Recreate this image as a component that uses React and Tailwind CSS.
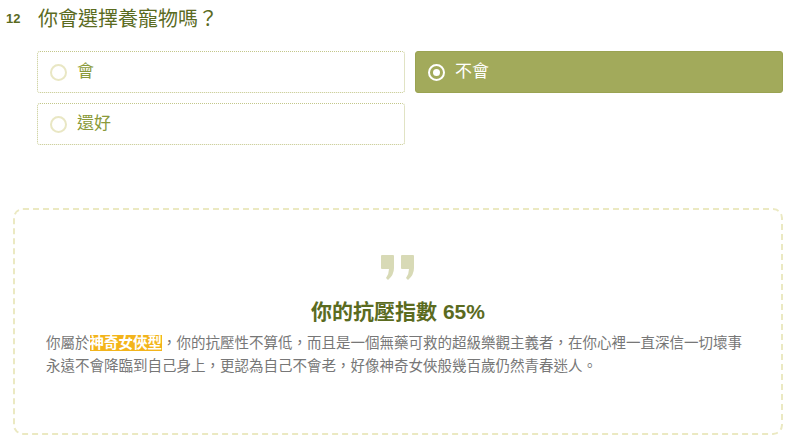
const options = [
  { label: "會", selected: false },
  { label: "不會", selected: true },
  { label: "還好", selected: false },
];

const Radio = ({ selected }) =>
  selected ? (
    <span className="w-[17px] h-[17px] rounded-full border-2 border-white flex items-center justify-center">
      <span className="w-[7px] h-[7px] rounded-full bg-white"></span>
    </span>
  ) : (
    <span className="w-[17px] h-[17px] rounded-full border-2 border-[#e9e7c4]"></span>
  );

const QuoteIcon = () => (
  <svg width="34" height="25" viewBox="0 0 34 25" fill="#d8dab6">
    <path d="M1 0 H12 Q13 0 13 1 V13 Q13 20 7 25 L5 23 Q8 19 8 14 H1 Q0 14 0 13 V1 Q0 0 1 0 Z" />
    <path d="M21 0 H32 Q33 0 33 1 V13 Q33 20 27 25 L25 23 Q28 19 28 14 H21 Q20 14 20 13 V1 Q20 0 21 0 Z" />
  </svg>
);

const App = () => {
  return (
    <div
      className="w-[800px] h-[445px] bg-white overflow-hidden"
      style={{ fontFamily: '"Liberation Sans", "Noto Sans CJK TC", sans-serif' }}
    >
      {/* Question */}
      <div className="flex items-center pt-[6px] pl-[6px]">
        <span className="text-[13px] font-bold text-[#5b6b1f] w-[32px]">12</span>
        <h2 className="text-[20px] text-[#5b6b1f] leading-[26px]">你會選擇養寵物嗎？</h2>
      </div>

      {/* Options */}
      <div className="grid grid-cols-2 gap-x-[10px] gap-y-[10px] pl-[37px] pr-[17px] mt-[19px]">
        {options.map((opt) => (
          <div
            key={opt.label}
            className={
              opt.selected
                ? "h-[42px] rounded-[3px] bg-[#a2aa5b] border border-[#9aa352] flex items-center pl-[12px] gap-[10px]"
                : "h-[42px] rounded-[3px] border border-dotted border-[#c3c78a] flex items-center pl-[12px] gap-[10px]"
            }
          >
            <Radio selected={opt.selected} />
            <span
              className={
                opt.selected
                  ? "text-[17px] text-white"
                  : "text-[17px] text-[#8a9a3a]"
              }
            >
              {opt.label}
            </span>
          </div>
        ))}
      </div>

      {/* Result card */}
      <div className="mt-[63px] ml-[13px] mr-[17px] h-[227px] rounded-[10px] border-2 border-dashed border-[#ebe9c2] flex flex-col items-center">
        <div className="mt-[45px]">
          <QuoteIcon />
        </div>
        <h3 className="mt-[18px] text-[21px] leading-[28px] font-bold text-[#5b6b1f]">你的抗壓指數 65%</h3>
        <p className="mt-[6px] self-stretch px-[31px] text-[14.5px] leading-[23px] text-[#777777]">
          你屬於
          <span className="bg-[#f3b41b] text-white font-bold">神奇女俠型</span>
          ，你的抗壓性不算低，而且是一個無藥可救的超級樂觀主義者，在你心裡一直深信一切壞事永遠不會降臨到自己身上，更認為自己不會老，好像神奇女俠般幾百歲仍然青春迷人。
        </p>
      </div>
    </div>
  );
};

export default App;
